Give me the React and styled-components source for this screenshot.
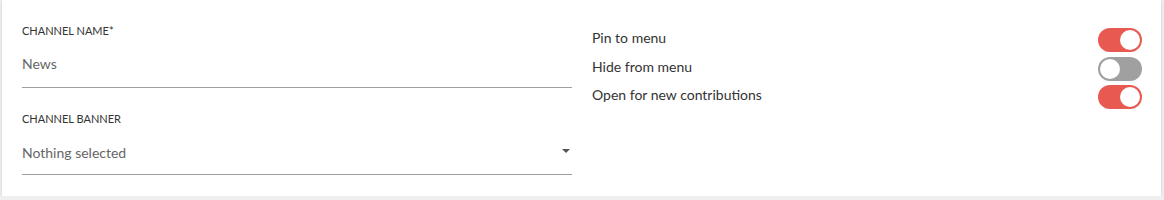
import React from 'react';
import styled, { createGlobalStyle } from 'styled-components';

const GlobalStyle = createGlobalStyle`
  body {
    margin: 0;
    background: #efefef;
    font-family: 'Lato', 'Liberation Sans', sans-serif;
  }
`;

const Card = styled.div`
  display: grid;
  grid-template-columns: 1fr 1fr;
  column-gap: 20px;
  margin: 0 3px 0 2px;
  padding: 24px 19px 22px 20px;
  background: #fff;
  box-shadow: 0 1px 3px rgba(0, 0, 0, 0.14);
  height: 150px;
`;

const Column = styled.div`
  display: flex;
  flex-direction: column;
`;

const Field = styled.div`
  display: flex;
  flex-direction: column;
  margin-top: ${(p) => (p.$first ? 0 : 24)}px;
`;

const Label = styled.label`
  font-size: 11px;
  line-height: 14px;
  color: #333;
  text-transform: uppercase;
`;

const InputRow = styled.div`
  display: flex;
  align-items: center;
  justify-content: space-between;
  box-sizing: border-box;
  height: ${(p) => p.$h}px;
  padding-top: ${(p) => p.$pt}px;
  border-bottom: 1px solid #9e9e9e;
  font-size: 14px;
  color: #666;
`;

const Caret = styled.span`
  width: 0;
  height: 0;
  margin-right: 2px;
  margin-top: -3px;
  border-left: 4px solid transparent;
  border-right: 4px solid transparent;
  border-top: 4px solid #555;
`;

const ToggleList = styled.div`
  display: flex;
  flex-direction: column;
  gap: 4.5px;
  padding-top: 4px;
`;

const ToggleRow = styled.div`
  display: flex;
  align-items: flex-start;
  justify-content: space-between;
  height: 24px;
  font-size: 14px;
  line-height: 20px;
  color: #333;
`;

const Track = styled.div`
  position: relative;
  width: 44px;
  height: 24px;
  border-radius: 12px;
  background: ${(p) => (p.$on ? '#e85a51' : '#a0a0a0')};
`;

const Knob = styled.div`
  position: absolute;
  top: 2px;
  left: ${(p) => (p.$on ? 22 : 2)}px;
  width: 20px;
  height: 20px;
  border-radius: 50%;
  background: #fff;
`;

const Toggle = ({ on }) => (
  <Track $on={on}>
    <Knob $on={on} />
  </Track>
);

const toggles = [
  { label: 'Pin to menu', on: true },
  { label: 'Hide from menu', on: false },
  { label: 'Open for new contributions', on: true },
];

const App = () => (
  <>
    <GlobalStyle />
    <Card>
      <Column>
        <Field $first>
          <Label>Channel name*</Label>
          <InputRow $h={50} $pt={2}>News</InputRow>
        </Field>
        <Field>
          <Label>Channel banner</Label>
          <InputRow $h={49} $pt={4}>
            Nothing selected
            <Caret />
          </InputRow>
        </Field>
      </Column>
      <ToggleList>
        {toggles.map((t) => (
          <ToggleRow key={t.label}>
            {t.label}
            <Toggle on={t.on} />
          </ToggleRow>
        ))}
      </ToggleList>
    </Card>
  </>
);

export default App;
